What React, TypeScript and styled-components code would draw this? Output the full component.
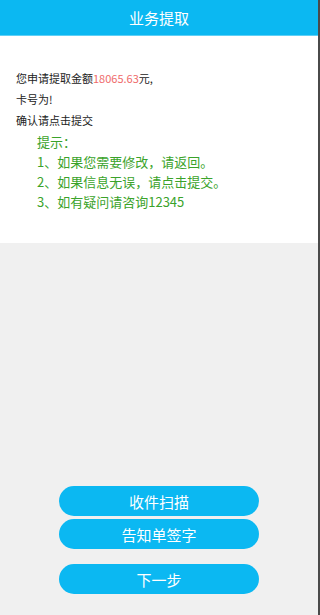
import styled, { createGlobalStyle } from "styled-components";

const GlobalStyle = createGlobalStyle`
  html, body {
    margin: 0;
    padding: 0;
    background: #4a4a4a;
  }
  body {
    font-family: "Noto Sans CJK SC", "Noto Sans", sans-serif;
  }
`;

const Page = styled.div`
  width: calc(100% - 2px);
  min-height: 100vh;
  background: #f0f0f0;
  display: flex;
  flex-direction: column;
`;

const Header = styled.header`
  height: 36px;
  background: #0bb8f2;
  border-bottom: 1px solid #5fd0f6;
  box-sizing: border-box;
  color: #fff;
  font-size: 15px;
  display: flex;
  align-items: center;
  justify-content: center;
`;

const Panel = styled.section`
  background: #fff;
  padding: 32px 16px 31px;
`;

const Line = styled.p`
  margin: 0;
  font-size: 11px;
  line-height: 21px;
  color: #222;
`;

const Amount = styled.span`
  color: #ef6a6a;
`;

const Tips = styled.div`
  margin-top: 1px;
  padding-left: 21px;
  color: #3aa32a;
  font-size: 13px;
  line-height: 20px;
`;

const Tip = styled.div``;

const Spacer = styled.div`
  flex: 1;
`;

const Actions = styled.div`
  display: flex;
  flex-direction: column;
  align-items: center;
  padding-bottom: 21px;
`;

const Button = styled.button<{ $gap?: number }>`
  width: 63%;
  height: 30px;
  margin-top: ${(p) => p.$gap ?? 0}px;
  border: none;
  border-radius: 15px;
  background: #0bb8f2;
  color: #fff;
  font-family: inherit;
  font-size: 15px;
  padding: 0;
  cursor: pointer;
`;

export default function App() {
  return (
    <>
      <GlobalStyle />
      <Page>
        <Header>业务提取</Header>
        <Panel>
          <Line>
            您申请提取金额<Amount>18065.63</Amount>元,
          </Line>
          <Line>卡号为!</Line>
          <Line>确认请点击提交</Line>
          <Tips>
            <Tip>提示：</Tip>
            <Tip>1、如果您需要修改，请返回。</Tip>
            <Tip>2、如果信息无误，请点击提交。</Tip>
            <Tip>3、如有疑问请咨询12345</Tip>
          </Tips>
        </Panel>
        <Spacer />
        <Actions>
          <Button>收件扫描</Button>
          <Button $gap={3}>告知单签字</Button>
          <Button $gap={15}>下一步</Button>
        </Actions>
      </Page>
    </>
  );
}
